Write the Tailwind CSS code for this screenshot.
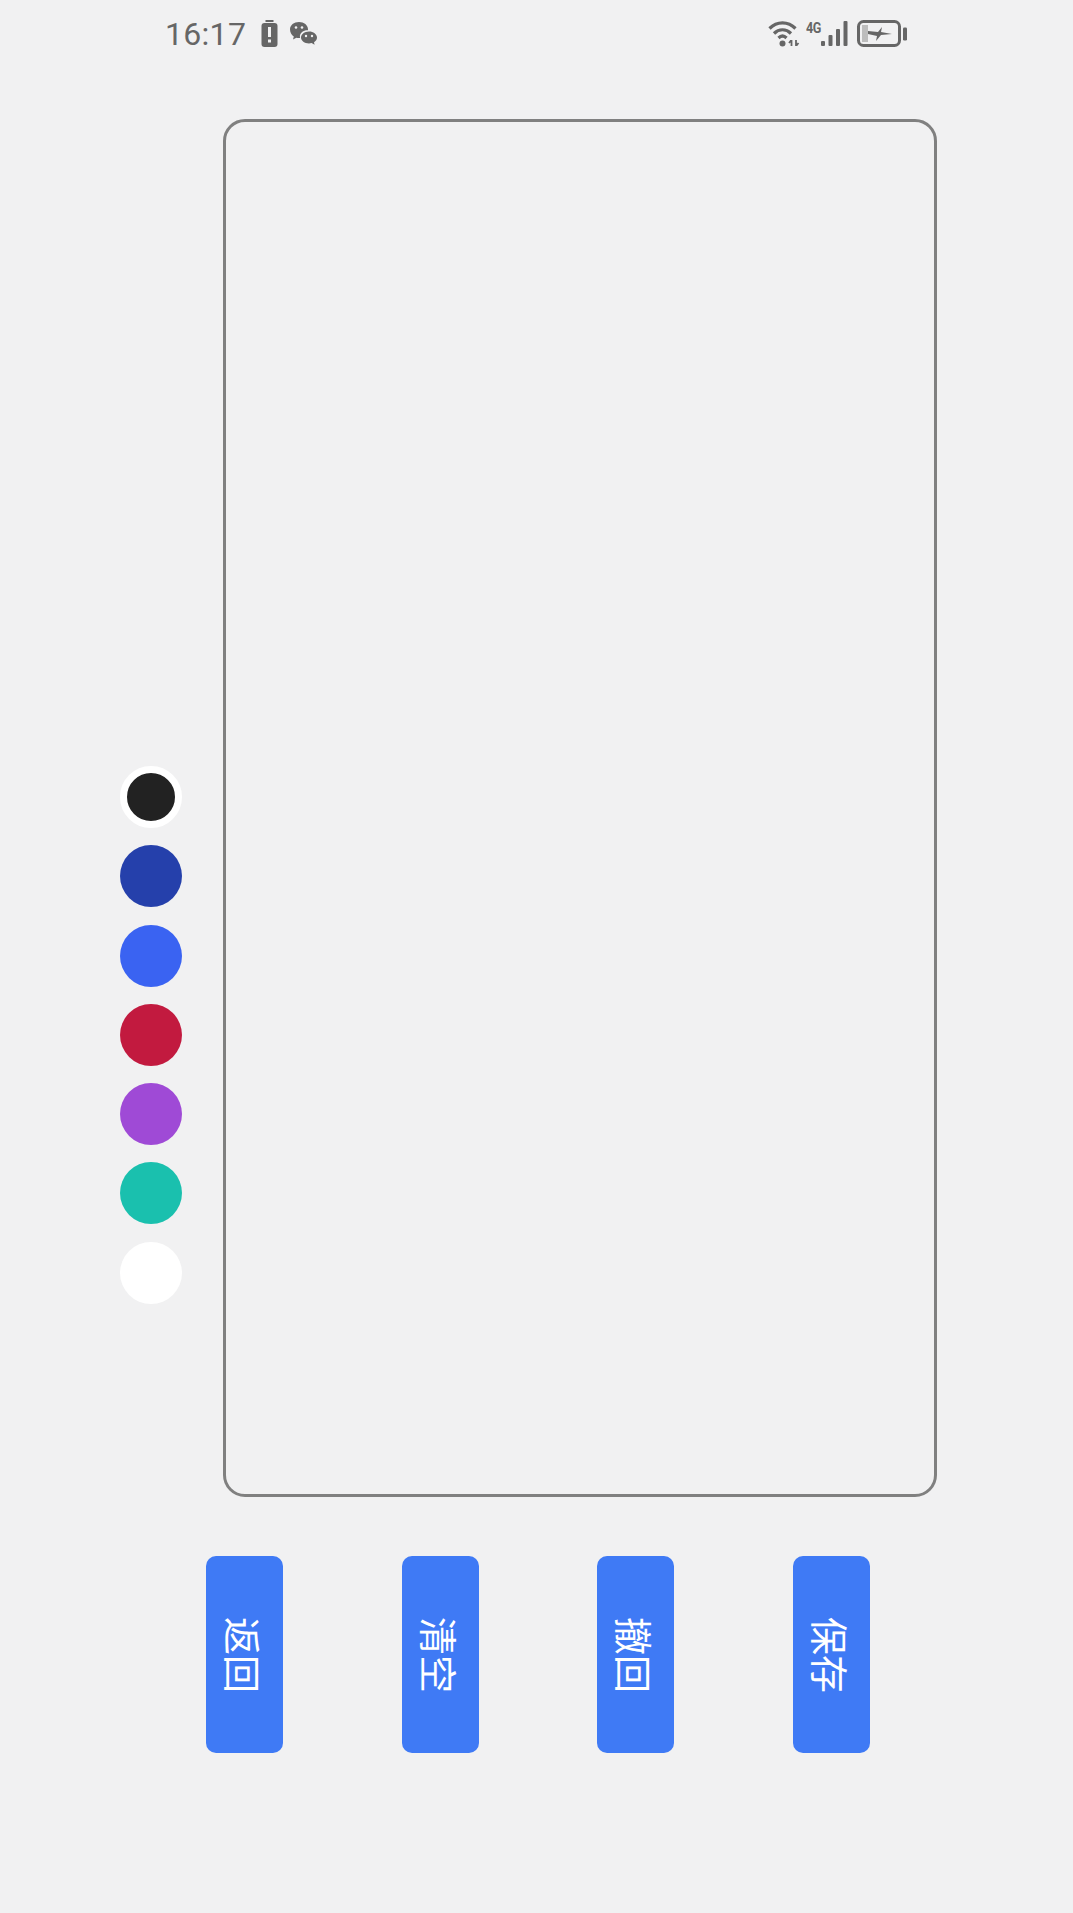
<!DOCTYPE html>
<html lang="zh-CN">
<head>
  <meta charset="UTF-8">
  <meta name="viewport" content="width=device-width, initial-scale=1.0">
  <title>签名板</title>
  <script src="https://cdn.jsdelivr.net/npm/@tailwindcss/browser@4"></script>
</head>
<body class="bg-[#f1f1f2] font-['Noto_Sans_CJK_SC',sans-serif]">
  <div class="w-[1073px] h-[1913px] overflow-hidden">

    <!-- status bar -->
    <div class="h-[66px] pl-[165px] pr-[166px] flex items-center justify-between text-[#666]">
      <div class="flex items-center">
        <span class="font-['Roboto',sans-serif] text-[32px] leading-none mt-[2px] tracking-[0.3px]">16:17</span>
        <svg class="ml-[15px] w-[17px] h-[27px]" viewBox="0 0 17 27" fill="#666">
          <rect x="4.500" y="0" width="8" height="2"/>
          <rect x="0.500" y="3" width="16" height="24" rx="3"/>
          <rect x="7" y="7" width="3" height="10" fill="#f1f1f2"/>
          <rect x="7" y="19.500" width="3" height="3" fill="#f1f1f2"/>
        </svg>
        <svg class="ml-[12px] w-[27px] h-[23px]" viewBox="0 0 27 23" fill="#666">
          <path d="M9 0c5 0 9 3.200 9 7.200 0 .4 0 .7-.1 1-4.400-.2-8 2.600-8 6.300 0 .5.100 1 .2 1.400-.4 0-.7.100-1.100.1-.9 0-1.800-.1-2.600-.3L3 17.500l.8-3C1.500 13.200 0 10.400 0 7.200 0 3.200 4 0 9 0z"/>
          <path d="M19 9.500c4.400 0 8 2.700 8 6 0 1.900-1.200 3.600-3 4.700l.6 2.600-3-1.700c-.8.200-1.700.3-2.600.3-4.400 0-8-2.700-8-5.900s3.600-6 8-6z"/>
          <circle cx="6" cy="5.500" r="1.300" fill="#f1f1f2"/>
          <circle cx="12" cy="5.500" r="1.300" fill="#f1f1f2"/>
          <circle cx="16" cy="14" r="1.200" fill="#f1f1f2"/>
          <circle cx="22" cy="14" r="1.200" fill="#f1f1f2"/>
        </svg>
      </div>
      <div class="flex items-start">
        <svg class="w-[32px] h-[27px]" viewBox="0 0 32 27" fill="none" stroke="#666" stroke-width="3.200">
          <path d="M1.500 8.500C9 1 20 1 27.500 8.500"/>
          <path d="M6 13.500c5-5 12-5 17 0"/>
          <path d="M10.500 18c2.500-2.500 5.500-2.500 8 0"/>
          <circle cx="14.500" cy="23.500" r="3" fill="#666" stroke="none"/>
          <path d="M23.500 26v-6M23 20.500l-2 2.500M28 20v6M28.500 25.500l2-2.500" stroke-width="1.800"/>
        </svg>
        <div class="relative w-[42px] h-[27px] ml-[6px]">
          <span class="absolute left-0 top-[1px] font-['Roboto',sans-serif] font-bold text-[14px] leading-none tracking-[-0.5px] scale-x-90 origin-left">4G</span>
          <svg class="absolute left-[15px] top-[1px] w-[27px] h-[25px]" viewBox="0 0 27 25" fill="#666">
            <rect x="0" y="20" width="4" height="5" rx="1"/>
            <rect x="7.500" y="14" width="4" height="11" rx="1"/>
            <rect x="15" y="8" width="4" height="17" rx="1"/>
            <rect x="22.500" y="0" width="4" height="25" rx="1"/>
          </svg>
        </div>
        <svg class="ml-[9px] w-[50px] h-[27px]" viewBox="0 0 50 27" fill="none">
          <rect x="1.500" y="1.500" width="41" height="24" rx="5" stroke="#666" stroke-width="3"/>
          <rect x="5" y="5" width="6" height="17" fill="#bdbdbd"/>
          <path d="M11 11l10 1 4-5-1 5 11 2-11 1-5 6 1-5-9-2z" fill="#666"/>
          <rect x="46" y="7.500" width="4" height="13" rx="1.200" fill="#666"/>
        </svg>
      </div>
    </div>

    <!-- colours + canvas -->
    <div class="flex pl-[120px] pt-[53px]">
      <div class="w-[62px] pt-[647px] flex flex-col gap-[17.300px]">
        <div class="w-[62px] h-[62px] rounded-full bg-[#222] border-[7.500px] border-white"></div>
        <div class="w-[62px] h-[62px] rounded-full bg-[#2540ab]"></div>
        <div class="w-[62px] h-[62px] rounded-full bg-[#3a63f2]"></div>
        <div class="w-[62px] h-[62px] rounded-full bg-[#c21a3f]"></div>
        <div class="w-[62px] h-[62px] rounded-full bg-[#9f4ad6]"></div>
        <div class="w-[62px] h-[62px] rounded-full bg-[#1ac0ae]"></div>
        <div class="w-[62px] h-[62px] rounded-full bg-white"></div>
      </div>
      <div class="ml-[41px] w-[714px] h-[1378px] rounded-[22px] border-[3px] border-[#808080]"></div>
    </div>

    <!-- buttons -->
    <div class="flex pl-[206px] mt-[59px] gap-[118.500px] text-white text-[38px] leading-none">
      <div class="w-[77px] h-[197px] rounded-[10px] bg-[#3f7af5] flex items-center justify-center"><span class="rotate-90 whitespace-nowrap">返回</span></div>
      <div class="w-[77px] h-[197px] rounded-[10px] bg-[#3f7af5] flex items-center justify-center"><span class="rotate-90 whitespace-nowrap">清空</span></div>
      <div class="w-[77px] h-[197px] rounded-[10px] bg-[#3f7af5] flex items-center justify-center"><span class="rotate-90 whitespace-nowrap">撤回</span></div>
      <div class="w-[77px] h-[197px] rounded-[10px] bg-[#3f7af5] flex items-center justify-center"><span class="rotate-90 whitespace-nowrap">保存</span></div>
    </div>
  </div>
</body>
</html>
